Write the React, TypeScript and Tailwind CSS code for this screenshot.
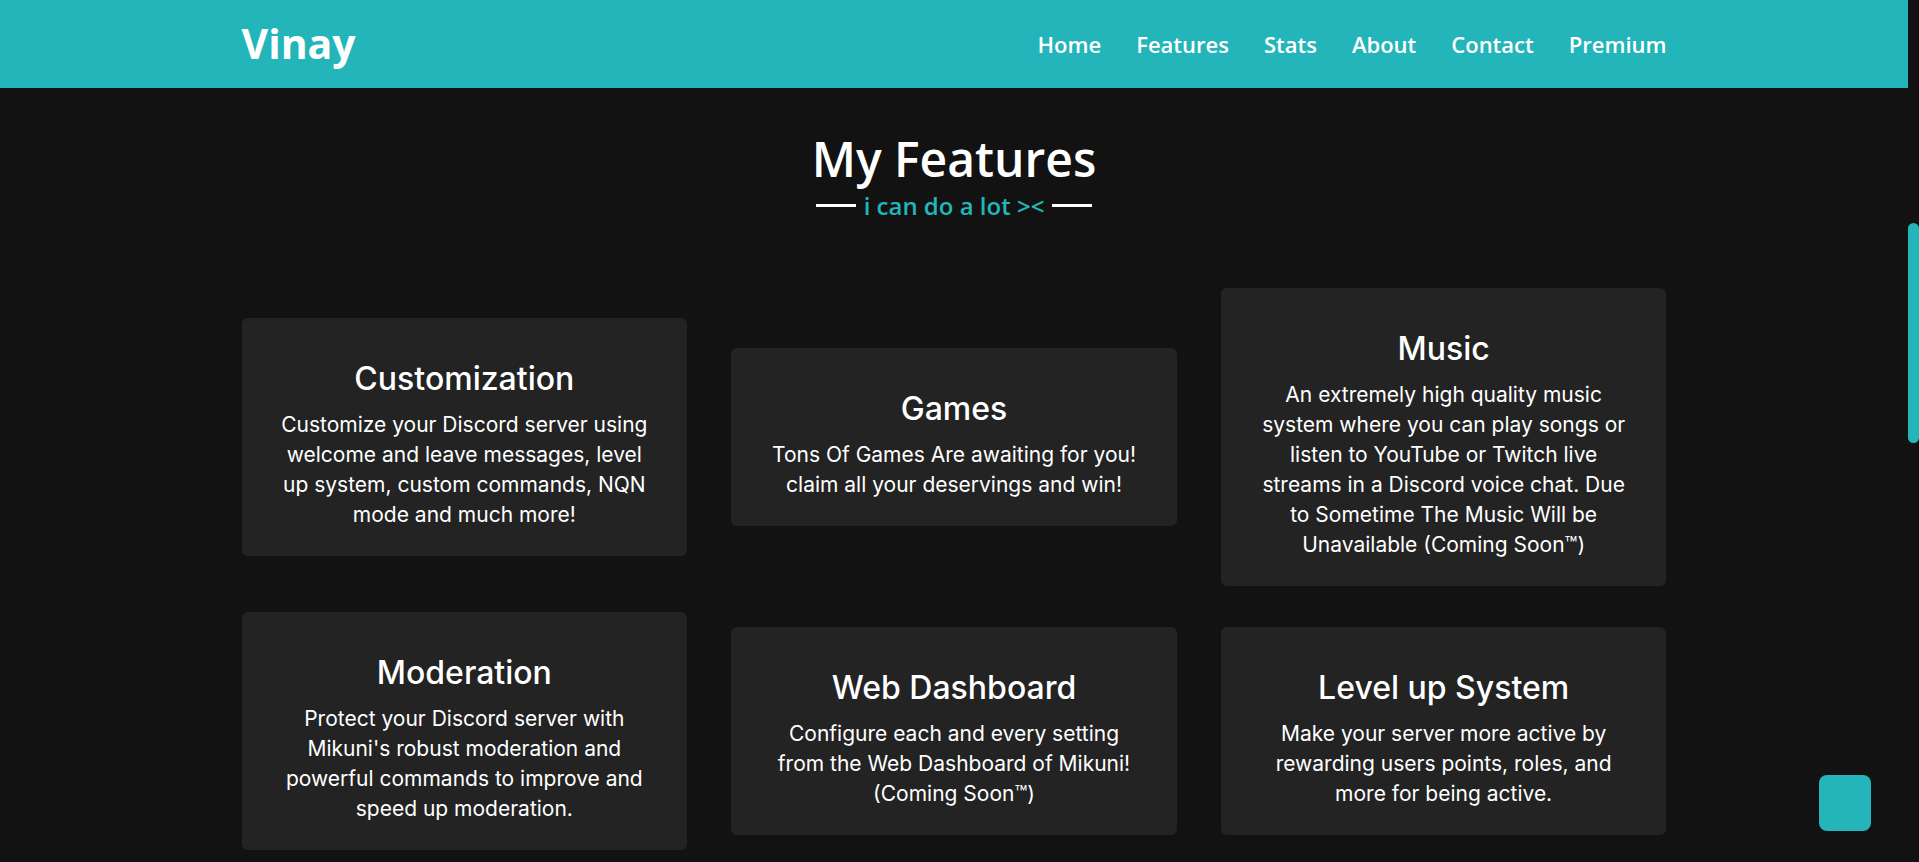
const navLinks = ["Home", "Features", "Stats", "About", "Contact", "Premium"];

type Feature = {
	title: string;
	lines: string[];
};

const features: Feature[] = [
	{
		title: "Customization",
		lines: [
			"Customize your Discord server using",
			"welcome and leave messages, level",
			"up system, custom commands, NQN",
			"mode and much more!",
		],
	},
	{
		title: "Games",
		lines: ["Tons Of Games Are awaiting for you!", "claim all your deservings and win!"],
	},
	{
		title: "Music",
		lines: [
			"An extremely high quality music",
			"system where you can play songs or",
			"listen to YouTube or Twitch live",
			"streams in a Discord voice chat. Due",
			"to Sometime The Music Will be",
			"Unavailable (Coming Soon™)",
		],
	},
	{
		title: "Moderation",
		lines: [
			"Protect your Discord server with",
			"Mikuni's robust moderation and",
			"powerful commands to improve and",
			"speed up moderation.",
		],
	},
	{
		title: "Web Dashboard",
		lines: [
			"Configure each and every setting",
			"from the Web Dashboard of Mikuni!",
			"(Coming Soon™)",
		],
	},
	{
		title: "Level up System",
		lines: [
			"Make your server more active by",
			"rewarding users points, roles, and",
			"more for being active.",
		],
	},
];

const FeatureCard = ({ title, lines }: Feature) => {
	return (
		<div className="bg-[#232323] rounded-md pt-[42px] pb-[26px] px-6 text-center text-white font-['Inter',sans-serif]">
			<h3 className="text-[32px] leading-[38px] font-medium">{title}</h3>
			<p className="mt-[12px] text-[21px] leading-[30px] font-normal">
				{lines.map((line) => (
					<span key={line} className="block whitespace-nowrap">{line}</span>
				))}
			</p>
		</div>
	);
};

export default function App() {
	return (
		<div className="relative flex h-[862px] overflow-hidden bg-[#121212]">
			<div className="flex-1 flex flex-col">
				<header className="h-[88px] bg-[#23b5b9]">
					<div className="w-[1425px] h-full mx-auto flex items-center justify-between font-['Open_Sans',sans-serif] text-white">
						<h1 className="text-[41px] leading-none font-bold pb-[2px]">Vinay</h1>
						<nav className="flex items-center gap-[35px]">
							{navLinks.map((link) => (
								<a key={link} href="#" className="text-[22px] font-semibold leading-none">
									{link}
								</a>
							))}
						</nav>
					</div>
				</header>

				<section id="features" className="font-['Open_Sans',sans-serif]">
					<div className="mt-[42px] flex flex-col items-center">
						<h2 className="text-[48px] leading-[57.6px] font-semibold text-white">My Features</h2>
						<div className="mt-[2px] flex items-center gap-2">
							<span className="w-10 h-[3px] bg-white" />
							<span className="text-2xl font-semibold text-[#23b5b9]">i can do a lot &gt;&lt;</span>
							<span className="w-10 h-[3px] bg-white" />
						</div>
					</div>

					<div className="w-[1425px] mx-auto mt-[66px] grid grid-cols-3 items-center gap-x-[44px] gap-y-[26px]">
						{features.map((f) => (
							<FeatureCard key={f.title} title={f.title} lines={f.lines} />
						))}
					</div>
				</section>
			</div>

			{/* scrollbar */}
			<div className="w-[11px] bg-[#121212]">
				<div className="mt-[223px] h-[220px] rounded-full bg-[#23b5b9]" />
			</div>

			<button
				aria-label="Back to top"
				className="absolute left-[1819px] top-[775px] w-[52px] h-[56px] rounded-lg bg-[#23b5b9]"
			/>
		</div>
	);
}
